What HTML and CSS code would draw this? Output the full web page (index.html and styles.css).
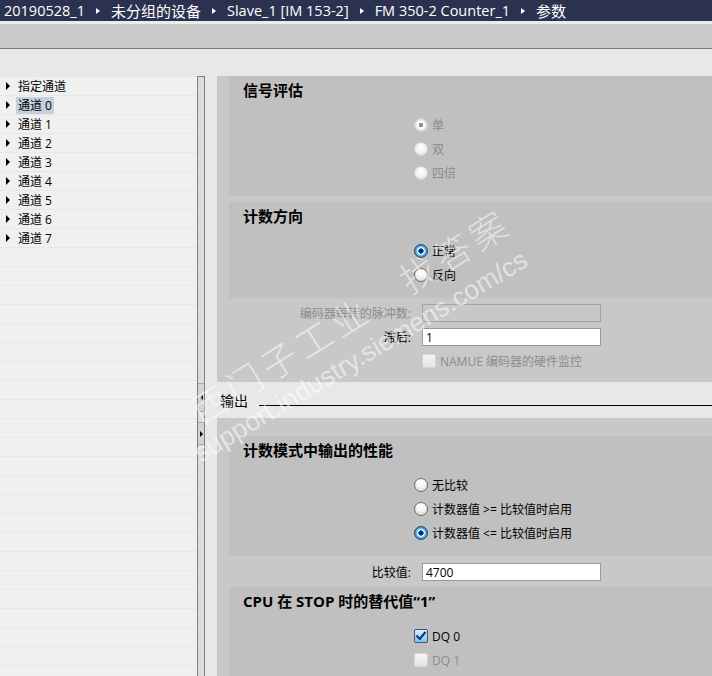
FILE: index.html
```html
<!DOCTYPE html>
<html lang="zh-CN">
<head>
<meta charset="utf-8">
<title>参数</title>
<link rel="stylesheet" href="styles.css">
</head>
<body>
<div class="app">
  <header class="crumbs">
    <span class="crumb">20190528_1</span><span class="sep"></span>
    <span class="crumb cjk">未分组的设备</span><span class="sep"></span>
    <span class="crumb">Slave_1 [IM 153-2]</span><span class="sep"></span>
    <span class="crumb">FM 350-2 Counter_1</span><span class="sep"></span>
    <span class="crumb cjk">参数</span>
  </header>
  <div class="toolbar"></div>
  <div class="main">
    <nav class="tree">
      <div class="node"><span class="caret"></span><span class="node-label">指定通道</span></div>
      <div class="node"><span class="caret"></span><span class="node-label selected">通道 0</span></div>
      <div class="node"><span class="caret"></span><span class="node-label">通道 1</span></div>
      <div class="node"><span class="caret"></span><span class="node-label">通道 2</span></div>
      <div class="node"><span class="caret"></span><span class="node-label">通道 3</span></div>
      <div class="node"><span class="caret"></span><span class="node-label">通道 4</span></div>
      <div class="node"><span class="caret"></span><span class="node-label">通道 5</span></div>
      <div class="node"><span class="caret"></span><span class="node-label">通道 6</span></div>
      <div class="node"><span class="caret"></span><span class="node-label">通道 7</span></div>
    </nav>
    <div class="splitter">
      <div class="split-btn collapse"><span class="tri-l"></span></div>
      <div class="split-btn expand"><span class="tri-r"></span></div>
    </div>
    <div class="content">
      <div class="group group-1">
        <section class="section">
          <h3 class="section-title">信号评估</h3>
          <div class="choices">
            <div class="choice muted"><span class="radio dis on"></span>单</div>
            <div class="choice muted"><span class="radio dis"></span>双</div>
            <div class="choice muted"><span class="radio dis"></span>四倍</div>
          </div>
        </section>
        <section class="section">
          <h3 class="section-title">计数方向</h3>
          <div class="choices">
            <div class="choice"><span class="radio on"></span>正常</div>
            <div class="choice"><span class="radio"></span>反向</div>
          </div>
        </section>
        <div class="fields">
          <div class="field-row">
            <span class="field-label muted">编码器每转的脉冲数:</span>
            <input class="field-input" type="text" value="1" disabled>
          </div>
          <div class="field-row">
            <span class="field-label">滞后:</span>
            <input class="field-input" type="text" value="1">
          </div>
          <div class="field-row check-row muted">
            <span class="check dis"></span>NAMUE 编码器的硬件监控
          </div>
        </div>
      </div>
      <div class="band">
        <span class="band-title">输出</span>
        <span class="band-rule"></span>
      </div>
      <div class="group group-2">
        <section class="section">
          <h3 class="section-title">计数模式中输出的性能</h3>
          <div class="choices">
            <div class="choice"><span class="radio"></span>无比较</div>
            <div class="choice"><span class="radio"></span>计数器值 &gt;= 比较值时启用</div>
            <div class="choice"><span class="radio on"></span>计数器值 &lt;= 比较值时启用</div>
          </div>
        </section>
        <div class="fields fields-2">
          <div class="field-row">
            <span class="field-label">比较值:</span>
            <input class="field-input" type="text" value="4700">
          </div>
        </div>
        <section class="section section-last">
          <h3 class="section-title">CPU 在 STOP 时的替代值“1”</h3>
          <div class="choices">
            <div class="choice">
              <span class="check on"><svg viewBox="0 0 12 12" width="12" height="12"><path d="M2.2 6.2 L4.8 8.9 L9.8 2.8" fill="none" stroke="#13307e" stroke-width="2.1" stroke-linecap="square"/></svg></span>DQ 0
            </div>
            <div class="choice muted"><span class="check dis"></span>DQ 1</div>
          </div>
        </section>
      </div>
    </div>
  </div>
  <div class="wm wm-cn">西门子工业　找答案</div>
  <div class="wm wm-url">support.industry.siemens.com/cs</div>
</div>
</body>
</html>
```

FILE: styles.css
```css
* { box-sizing: border-box; }

html, body {
  margin: 0;
  padding: 0;
}

body {
  font-family: "Open Sans", "Noto Sans CJK SC", sans-serif;
  font-size: 12px;
  color: #000;
  background: #e8e8e8;
}

.app {
  position: relative;
  width: 712px;
  height: 676px;
  display: flex;
  flex-direction: column;
  overflow: hidden;
}

/* breadcrumb bar */
.crumbs {
  height: 21px;
  flex: none;
  background: #2b324f;
  color: #fff;
  display: flex;
  align-items: center;
  padding-left: 4px;
  font-size: 14.5px;
  font-weight: 400;
  white-space: nowrap;
}

.crumb.cjk { font-size: 15px; }

.sep {
  width: 0;
  height: 0;
  border-left: 4px solid #fff;
  border-top: 3.5px solid transparent;
  border-bottom: 3.5px solid transparent;
  margin: 0 11px;
}

.toolbar {
  height: 28px;
  flex: none;
  border-top: 3px solid #ececec;
  border-bottom: 1px solid #7a7a7a;
  background: #c9c9c9;
}

.main {
  flex: 1;
  min-height: 0;
  display: flex;
  padding-top: 27px;
}

/* tree */
.tree {
  width: 197px;
  flex: none;
  background: repeating-linear-gradient(to bottom, #e7e7e7 0 1px, #f0f0f0 1px 19px);
}

.node {
  height: 19px;
  padding-top: 1px;
  display: flex;
  align-items: center;
}

.caret {
  width: 0;
  height: 0;
  border-left: 4px solid #000;
  border-top: 4px solid transparent;
  border-bottom: 4px solid transparent;
  margin-left: 6px;
  margin-right: 6px;
}

.node-label {
  line-height: 17px;
  padding: 0 2px;
}

.node-label.selected {
  background: #c4d0dd;
}

/* splitter */
.splitter {
  width: 8px;
  flex: none;
  border: 1px solid #7f7f7f;
  border-bottom: 0;
  background: #dddddd;
  display: flex;
  flex-direction: column;
}

.split-btn {
  display: flex;
  align-items: center;
  justify-content: center;
  border-top: 1px solid #a9a9a9;
  border-bottom: 1px solid #a9a9a9;
  background: #d3d3d3;
}

.split-btn.collapse { margin-top: 306px; height: 29px; }
.split-btn.expand { margin-top: 10px; height: 23px; }

.tri-l {
  width: 0; height: 0;
  border-right: 3px solid #000;
  border-top: 3px solid transparent;
  border-bottom: 3px solid transparent;
}

.tri-r {
  width: 0; height: 0;
  border-left: 3px solid #000;
  border-top: 3px solid transparent;
  border-bottom: 3px solid transparent;
}

/* content */
.content {
  flex: 1;
  min-width: 0;
  display: flex;
  flex-direction: column;
}

.group {
  margin-left: 12px;
  background: #c8c8c8;
  padding-left: 12px;
}

.group-1 { padding-bottom: 9px; }

.group-2 {
  flex: 1;
  padding-top: 18px;
  display: flex;
  flex-direction: column;
}

.section {
  background: #c0c0c0;
  padding: 4px 0 11px;
}

.section + .section { margin-top: 6px; }

.section-last { flex: 1; }

.section-title {
  margin: 0;
  padding-left: 14px;
  font-size: 15px;
  font-weight: 700;
  line-height: 20px;
}

.choices {
  margin-top: 13px;
  padding-left: 185px;
}

.choice {
  height: 24px;
  display: flex;
  align-items: center;
  gap: 4px;
}

.muted { color: #8c8c8c; }

.radio {
  width: 14px;
  height: 14px;
  flex: none;
  border-radius: 50%;
  border: 1px solid #6a6a6a;
  background: radial-gradient(circle at 50% 30%, #ffffff 0, #f3f3f3 45%, #cdcdcd 100%);
}

.radio.on {
  border-color: #34495f;
  background: radial-gradient(circle, #0a2c76 0 2.3px, #e2f5ff 2.9px 3.5px, #63c3f1 4.3px, #1b82cc 6.5px);
}

.radio.dis {
  border-color: #d2d2d2;
  background: radial-gradient(circle at 50% 35%, #ffffff 0, #f4f4f4 50%, #dcdcdc 100%);
}

.radio.dis.on {
  background: radial-gradient(circle, #8f8f8f 0 2px, #ffffff 2.6px 3.6px, #eeeeee 4.5px, #d6d6d6 6.5px);
}

.check {
  width: 14px;
  height: 14px;
  flex: none;
  border-radius: 2px;
  display: flex;
  align-items: center;
  justify-content: center;
}

.check.on {
  border: 1px solid #47536a;
  background: linear-gradient(#d6effd, #7cc5ef);
}

.check.dis {
  border: 1px solid #d4d4d4;
  background: linear-gradient(#f6f6f6, #e2e2e2);
}

/* fields */
.fields { padding-top: 3px; }

.fields-2 { padding: 4px 0 3px; }

.field-row {
  height: 24px;
  display: flex;
  align-items: center;
}

.field-label {
  width: 182px;
  flex: none;
  text-align: right;
}

.field-input {
  margin: 0 0 0 11px;
  width: 179px;
  height: 18px;
  border: 1px solid #9a9a9a;
  border-radius: 0;
  background: #fff;
  padding: 0 3px;
  font: inherit;
  color: #000;
  outline: none;
}

.field-input:disabled {
  background: #c8c8c8;
  border-color: #a3a3a3;
  color: #b5b5b5;
}

.check-row {
  padding-left: 193px;
  gap: 4px;
}

/* output band */
.band {
  height: 36px;
  flex: none;
  display: flex;
  align-items: center;
  padding-left: 15px;
  font-size: 14px;
}

.band-rule {
  flex: 1;
  height: 1px;
  background: #000;
  margin: 10px 0 0 11px;
}

/* watermark */
.wm {
  position: absolute;
  color: rgba(255, 255, 255, 0.55);
  white-space: nowrap;
  pointer-events: none;
  transform-origin: 0 50%;
}

.wm-cn {
  left: 193px;
  top: 394px;
  font-family: "Noto Sans CJK SC", sans-serif;
  font-size: 36px;
  line-height: 36px;
  letter-spacing: 5px;
  font-weight: 300;
  transform: rotate(-32deg);
}

.wm-url {
  left: 196px;
  top: 442px;
  font-family: "Liberation Sans", sans-serif;
  font-size: 26.5px;
  line-height: 26px;
  transform: rotate(-31deg);
}
```
